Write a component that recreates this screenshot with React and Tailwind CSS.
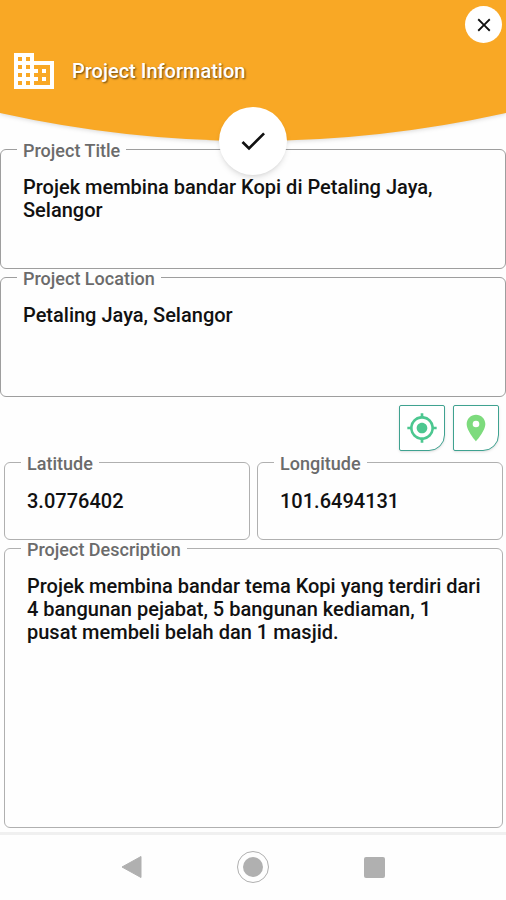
import React from 'react';
import { MdBusiness, MdCheck, MdClose, MdLocationOn, MdMyLocation } from 'react-icons/md';

function Field({ id, label, value, area, inputClass, className = 'border-[#b0b0b0]' }) {
  const text = 'block w-full resize-none overflow-hidden bg-transparent pl-4 pr-3 text-[20px] leading-[23px] font-medium text-[#111] outline-none';
  return (
    <fieldset className={`min-w-0 rounded-md border ${className}`}>
      <legend className="ml-4 h-4 px-[6px] text-[18px] leading-5 font-medium text-[#6b6b6b]">
        <label htmlFor={id}>{label}</label>
      </legend>
      <div className="px-[6px] pt-[19px] pb-[11px]">
        {area ? (
          <textarea id={id} defaultValue={value} className={`${text} ${inputClass}`} />
        ) : (
          <input id={id} type="text" defaultValue={value} className={`${text} ${inputClass}`} />
        )}
      </div>
    </fieldset>
  );
}

function ToolButton({ label, children }) {
  return (
    <button
      type="button"
      aria-label={label}
      className="flex size-[46px] items-center justify-center rounded-xs rounded-br-2xl border border-[#3fa290] bg-white shadow-sm"
    >
      {children}
    </button>
  );
}

export default function App() {
  return (
    <div className="flex min-h-screen flex-col bg-[#fefefe] font-[Roboto,sans-serif]">
      <header className="relative">
        <svg
          className="absolute inset-0 h-full w-full drop-shadow-sm"
          viewBox="0 0 506 141"
          preserveAspectRatio="none"
          aria-hidden="true"
        >
          <path d="M0 0H506V113Q253 169 0 113Z" fill="#f9a825" />
        </svg>
        <div className="relative flex h-[141px] items-center gap-[14px] pt-px pl-[10px]">
          <MdBusiness className="size-12 text-white" />
          <h1 className="text-[20px] font-medium text-white [text-shadow:1px_1px_2px_rgba(0,0,0,0.6)]">
            Project Information
          </h1>
        </div>
        <button
          type="button"
          aria-label="Close"
          className="absolute top-[6px] right-1 flex size-[37px] items-center justify-center rounded-full bg-white text-[#111]"
        >
          <MdClose className="size-[22px]" />
        </button>
        <button
          type="button"
          aria-label="Save"
          className="absolute -bottom-[34px] left-1/2 flex size-[68px] -translate-x-1/2 items-center justify-center rounded-full bg-white text-[#111] shadow-md"
        >
          <MdCheck className="size-8" />
        </button>
      </header>

      <main className="flex flex-col">
        <Field
          id="title"
          label="Project Title"
          value="Projek membina bandar Kopi di Petaling Jaya, Selangor"
          area
          inputClass="h-[81px]"
          className="border-[#9e9e9e]"
        />
        <Field
          id="location"
          label="Project Location"
          value="Petaling Jaya, Selangor"
          area
          inputClass="h-[81px]"
          className="border-[#9e9e9e]"
        />
        <div className="flex justify-end gap-2 pt-2 pr-[7px] pb-[3px]">
          <ToolButton label="Use my location">
            <MdMyLocation className="size-8 text-[#4cc790]" />
          </ToolButton>
          <ToolButton label="Pick on map">
            <MdLocationOn className="size-8 text-[#7ddb7d]" />
          </ToolButton>
        </div>
        <div className="flex flex-col pr-[3px] pl-1">
          <div className="grid grid-cols-2 gap-[7px]">
            <Field id="lat" label="Latitude" value="3.0776402" inputClass="h-[39px] pb-4" />
            <Field id="lng" label="Longitude" value="101.6494131" inputClass="h-[39px] pb-4" />
          </div>
          <Field
            id="desc"
            label="Project Description"
            value="Projek membina bandar tema Kopi yang terdiri dari 4 bangunan pejabat, 5 bangunan kediaman, 1 pusat membeli belah dan 1 masjid."
            area
            inputClass="h-[241px]"
          />
        </div>
      </main>

      <nav aria-label="System" className="mt-1 flex h-[67px] items-center justify-center gap-[89px] border-t-3 border-[#f0f0f0]">
        <button type="button" aria-label="Back" className="flex size-8 items-center justify-center">
          <svg viewBox="0 0 32 32" className="size-8" aria-hidden="true">
            <path d="M6 16L25 5.500V26.500Z" fill="#b0b0b0" stroke="#b0b0b0" strokeLinejoin="round" />
          </svg>
        </button>
        <button type="button" aria-label="Home" className="flex size-8 items-center justify-center rounded-full border border-[#b0b0b0]">
          <span className="size-5 rounded-full bg-[#b0b0b0]" />
        </button>
        <button type="button" aria-label="Recent apps" className="flex size-8 items-center justify-center">
          <span className="size-[21px] rounded-xs bg-[#b0b0b0]" />
        </button>
      </nav>
    </div>
  );
}
